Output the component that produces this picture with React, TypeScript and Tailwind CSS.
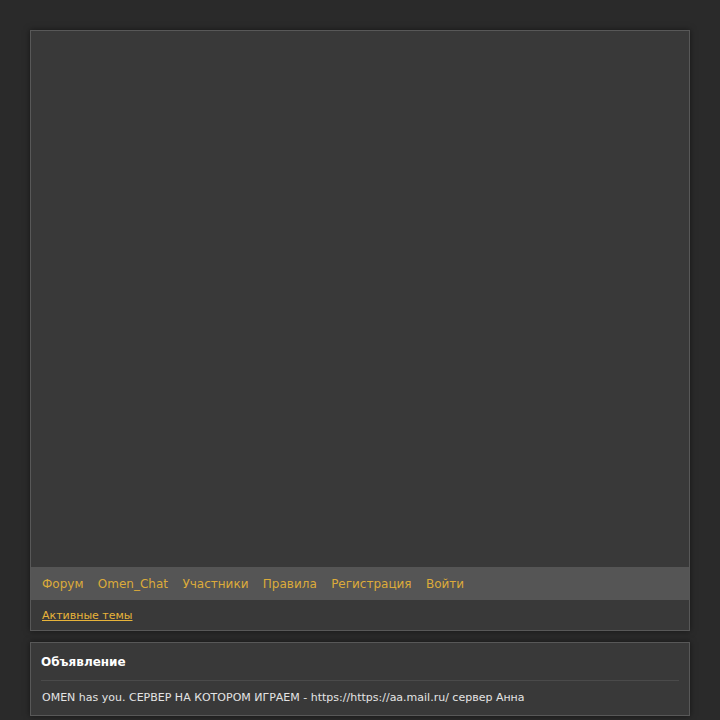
import React from 'react';

const navLinks = ['Форум', 'Omen_Chat', 'Участники', 'Правила', 'Регистрация', 'Войти'];

export default function App() {
  return (
    <div className="min-h-[720px] bg-[#2a2a2a] pt-[30px] px-[30px] font-['DejaVu_Sans',sans-serif]">
      {/* Header */}
      <div className="border border-[#585858] bg-[#393939] shadow-[0_0_6px_rgba(0,0,0,0.5)]">
        <div className="h-[536px]"></div>
        <nav className="flex h-[33px] items-center gap-[14.4px] bg-[#555555] px-[11px] text-[12px] text-[#dcab3a]">
          {navLinks.map((l) => (
            <a key={l} href="#" className="leading-none">
              {l}
            </a>
          ))}
        </nav>
        <div className="flex h-[30px] items-center px-[11px] pt-[2px]">
          <a href="#" className="text-[11px] text-[#e8b43a] underline">
            Активные темы
          </a>
        </div>
      </div>

      {/* Announcement */}
      <div className="mt-[11px] border border-[#585858] bg-[#393939] px-[10px] shadow-[0_0_6px_rgba(0,0,0,0.5)]">
        <div className="flex h-[37px] items-end pb-[9px] text-[12px] font-bold text-white">Объявление</div>
        <div className="border-t border-[#4a4a4a]"></div>
        <div className="flex h-[34px] items-center px-[1px] text-[11px] text-[#e4e4e4]">
          OMEN has you. СЕРВЕР НА КОТОРОМ ИГРАЕМ - https://https://aa.mail.ru/ сервер Анна
        </div>
      </div>
    </div>
  );
}
